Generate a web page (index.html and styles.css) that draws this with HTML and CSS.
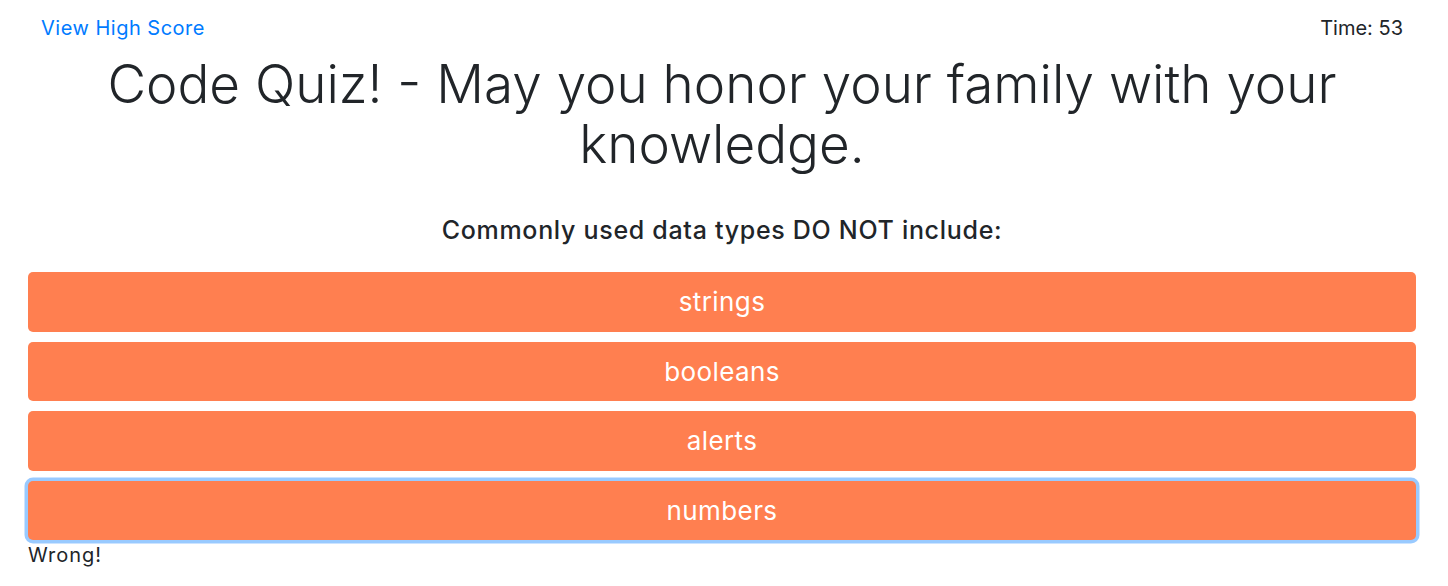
FILE: index.html
```html
<!DOCTYPE html>
<html lang="en">
  <head>
    <meta charset="UTF-8" />
    <meta name="viewport" content="width=device-width, initial-scale=1.0" />
    <title>Code Quiz</title>
    <link rel="stylesheet" href="styles.css">
  </head>
  <body>
    <header class="top-bar">
      <a href="#" class="high-score">View High Score</a>
      <span class="timer">Time: 53</span>
    </header>
    <main class="quiz">
      <h1 class="quiz-title">Code Quiz! - May you honor your family with your knowledge.</h1>
      <h2 class="question">Commonly used data types DO NOT include:</h2>
      <div class="answers">
        <button class="answer">strings</button>
        <button class="answer">booleans</button>
        <button class="answer">alerts</button>
        <button class="answer focused">numbers</button>
      </div>
      <p class="result">Wrong!</p>
    </main>
  </body>
</html>
```

FILE: styles.css
```css
body {
  font-family: Inter, "DejaVu Sans", sans-serif;
  margin: 0;
  padding: 0;
  background-color: #fff;
  color: #212529;
}
.top-bar {
  display: flex;
  justify-content: space-between;
  align-items: center;
  padding: 14px 45px 0 41px;
  height: 28px;
  font-size: 20px;
  font-weight: 400;
}
.high-score {
  color: #007bff;
  text-decoration: none;
  letter-spacing: 0.5px;
}
.timer {
  color: #212529;
}
.quiz {
  padding: 0 32px 0 28px;
}
.quiz-title {
  margin: 12px 0 0;
  font-size: 53px;
  font-weight: 300;
  line-height: 60px;
  text-align: center;
}
.question {
  margin: 38px 0 0;
  font-size: 25px;
  font-weight: 500;
  letter-spacing: 0.7px;
  line-height: 36px;
  text-align: center;
}
.answers {
  display: flex;
  flex-direction: column;
  gap: 10px;
  margin-top: 24px;
}
.answer {
  display: block;
  width: 100%;
  height: 59.5px;
  border: none;
  border-radius: 5px;
  background-color: #ff7f50;
  color: #fff;
  font-family: inherit;
  font-size: 26px;
  letter-spacing: 0.4px;
  cursor: pointer;
}
.answer.focused {
  box-shadow: 0 0 0 3.5px rgba(0, 123, 255, 0.4);
}
.result {
  margin: 0;
  font-size: 20px;
  letter-spacing: 1px;
  line-height: 30px;
}
```
